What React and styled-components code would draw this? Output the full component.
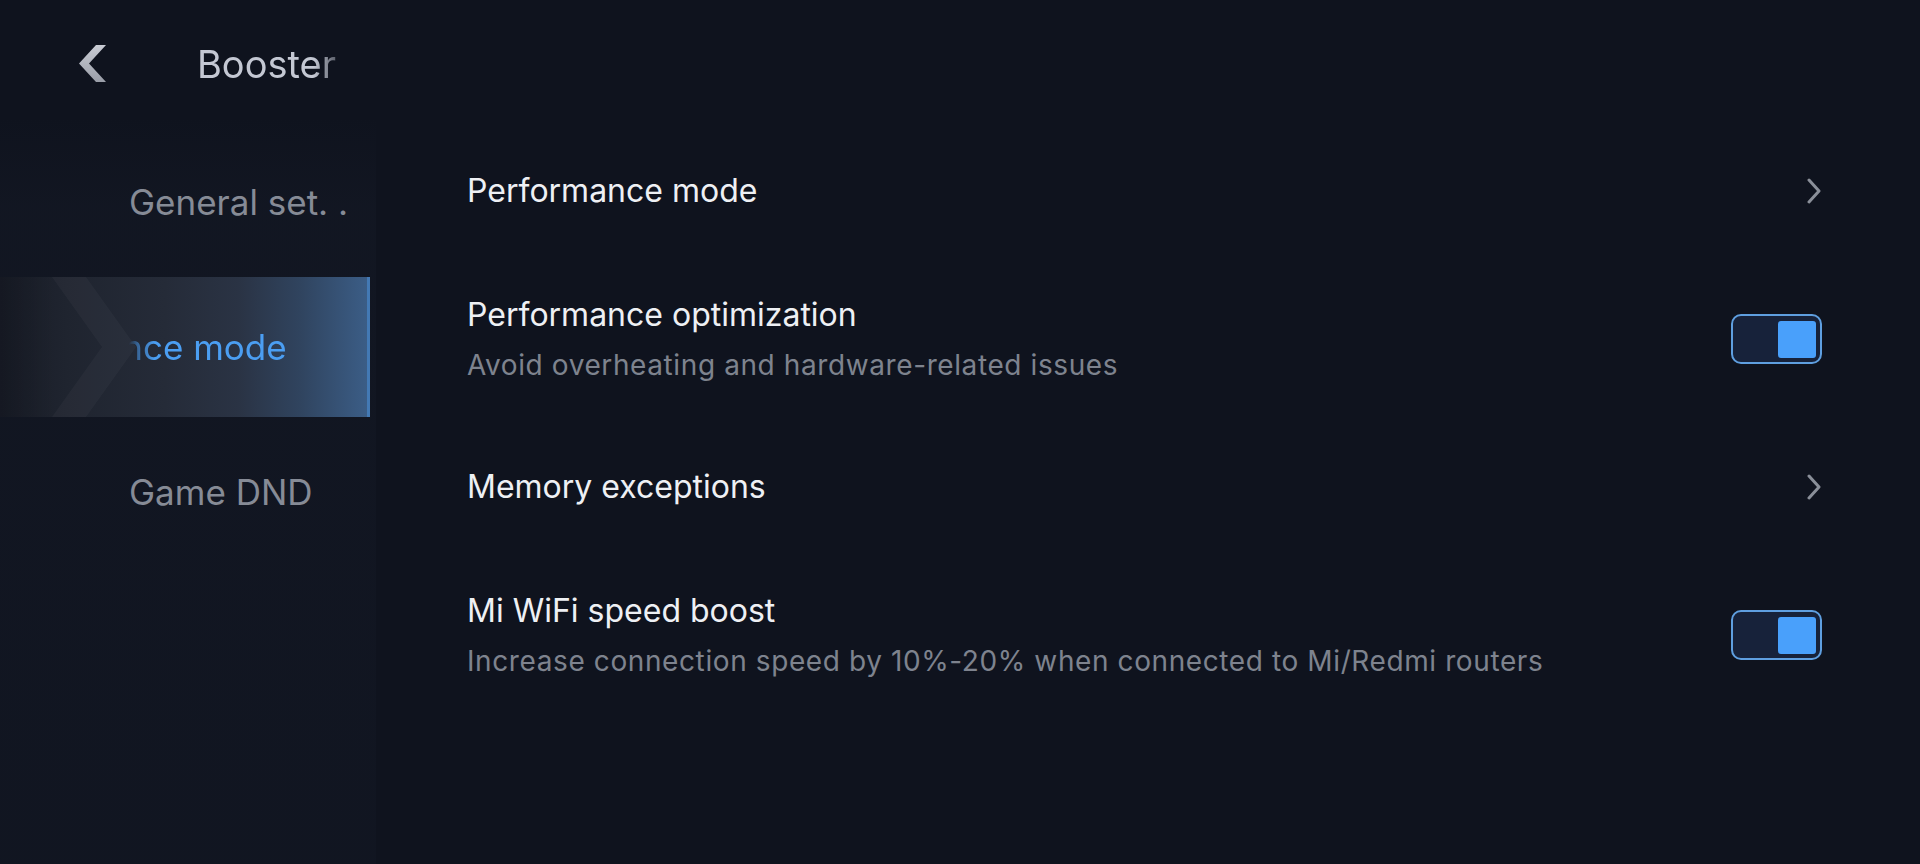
import React from "react";
import styled, { createGlobalStyle } from "styled-components";

const Global = createGlobalStyle`
  html, body { margin: 0; padding: 0; background: #0f131e; }
  body { font-family: Inter, "Noto Sans", Roboto, sans-serif; -webkit-font-smoothing: antialiased; }
  * { box-sizing: border-box; }
`;

const Page = styled.div`
  width: 1920px;
  height: 864px;
  background: #0f131e;
  display: flex;
  flex-direction: column;
  overflow: hidden;
`;

const Header = styled.header`
  height: 117px;
  padding: 10px 0 0 78px;
  display: flex;
  align-items: center;
  flex-shrink: 0;
`;

const BackButton = styled.button`
  width: 29px;
  height: 39px;
  padding: 0;
  border: 0;
  background: none;
  display: flex;
  cursor: pointer;
`;

const Title = styled.h1`
  margin: 0 0 0 90px;
  width: 146px;
  font-size: 38px;
  font-weight: 400;
  color: #c4c8d3;
  white-space: nowrap;
  overflow: hidden;
  -webkit-mask-image: linear-gradient(90deg, #000 80%, rgba(0,0,0,0.25) 100%);
  mask-image: linear-gradient(90deg, #000 80%, rgba(0,0,0,0.25) 100%);
`;

const Body = styled.div`
  flex: 1;
  display: flex;
  min-height: 0;
`;

const Sidebar = styled.nav`
  width: 376px;
  flex-shrink: 0;
  padding: 15px 6px 0 0;
  display: flex;
  flex-direction: column;
  gap: 5px;
  background: linear-gradient(180deg, rgba(30,36,50,0) 0%, rgba(28,34,48,0.22) 12%, rgba(24,30,44,0.22) 100%);
`;

const NavItem = styled.div`
  position: relative;
  height: 140px;
  display: flex;
  align-items: center;
  padding-left: 129px;
  overflow: hidden;
  background: ${(p) =>
    p.$active
      ? "linear-gradient(90deg, #181c27 0%, #1f242f 18%, #252b38 45%, #2a3344 65%, #30445f 82%, #3b5d86 100%)"
      : "transparent"};
  border-right: ${(p) => (p.$active ? "3px solid #4379b4" : "0")};
  &::after {
    content: "";
    display: ${(p) => (p.$active ? "block" : "none")};
    position: absolute;
    right: -3px;
    top: 0;
    bottom: 0;
    width: 3px;
    background: linear-gradient(180deg, rgba(90,160,240,0.3) 0%, #5fa8f5 50%, rgba(90,160,240,0.3) 100%);
  }
`;

const Watermark = styled.svg`
  position: absolute;
  left: 0;
  top: 0;
  width: 160px;
  height: 140px;
`;

const NavLabel = styled.span`
  position: relative;
  display: block;
  font-size: 35px;
  font-weight: 400;
  white-space: nowrap;
  color: ${(p) => (p.$active ? "#4b9ef2" : "#868b96")};
  ${(p) =>
    p.$active &&
    `
    width: 200px;
    overflow: hidden;
    -webkit-mask-image: linear-gradient(90deg, transparent 0, rgba(0,0,0,0.5) 8px, #000 26px);
    mask-image: linear-gradient(90deg, transparent 0, rgba(0,0,0,0.5) 8px, #000 26px);
  `}
`;

const Marquee = styled.span`
  display: inline-block;
  transform: translateX(${(p) => p.$offset || 0}px);
`;

const Content = styled.main`
  flex: 1;
  padding: 0 98px 0 91px;
  display: flex;
  flex-direction: column;
`;

const Row = styled.div`
  height: 148px;
  display: flex;
  align-items: center;
  justify-content: space-between;
`;

const Texts = styled.div`
  display: flex;
  flex-direction: column;
  gap: 12px;
`;

const RowTitle = styled.div`
  font-size: 32px;
  line-height: 40px;
  color: #eef0f4;
  font-weight: 400;
`;

const RowSub = styled.div`
  font-size: 28px;
  line-height: 36px;
  letter-spacing: 0.6px;
  color: #7e838e;
  font-weight: 400;
`;

const Toggle = styled.div`
  width: 91px;
  height: 50px;
  border: 2px solid #5f9fe0;
  border-radius: 10px;
  background: #17223a;
  display: flex;
  align-items: center;
  justify-content: ${(p) => (p.$on ? "flex-end" : "flex-start")};
  padding: 0 4px;
`;

const Knob = styled.div`
  width: 38px;
  height: 37px;
  border-radius: 3px;
  background: #49a0fb;
`;

const Chevron = () => (
  <svg width="16" height="26" viewBox="0 0 16 26">
    <path d="M3 2 L13 13 L3 24" fill="none" stroke="#8a8f99" strokeWidth="3" strokeLinecap="round" strokeLinejoin="round" />
  </svg>
);

const BackIcon = () => (
  <svg width="29" height="39" viewBox="0 0 29 39">
    <defs>
      <linearGradient id="bk" x1="0" y1="0" x2="0" y2="1">
        <stop offset="0" stopColor="#c9ccd4" />
        <stop offset="1" stopColor="#9a9ea8" />
      </linearGradient>
    </defs>
    <polygon points="18,1 28,1 11,19.5 28,38 18,38 1,19.5" fill="url(#bk)" />
  </svg>
);

const rows = [
  { title: "Performance mode", type: "link" },
  { title: "Performance optimization", sub: "Avoid overheating and hardware-related issues", type: "toggle" },
  { title: "Memory exceptions", type: "link" },
  { title: "Mi WiFi speed boost", sub: "Increase connection speed by 10%-20% when connected to Mi/Redmi routers", type: "toggle" },
];

export default function App() {
  return (
    <Page>
      <Global />
      <Header>
        <BackButton aria-label="Back">
          <BackIcon />
        </BackButton>
        <Title>Booster</Title>
      </Header>
      <Body>
        <Sidebar>
          <NavItem>
            <NavLabel>General set. .</NavLabel>
          </NavItem>
          <NavItem $active>
            <Watermark viewBox="0 0 160 140">
              <defs>
                <linearGradient id="wm" x1="0" y1="0" x2="1" y2="0">
                  <stop offset="0" stopColor="#000" stopOpacity="0.14" />
                  <stop offset="0.35" stopColor="#000" stopOpacity="0" />
                </linearGradient>
              </defs>
              <rect x="0" y="0" width="160" height="140" fill="url(#wm)" />
              <polygon points="52,0 86,0 136,70 86,140 52,140 102,70" fill="rgba(255,255,255,0.03)" />
            </Watermark>
            <NavLabel $active>
              <Marquee $offset={-160}>Performance mode</Marquee>
            </NavLabel>
          </NavItem>
          <NavItem>
            <NavLabel>Game DND</NavLabel>
          </NavItem>
        </Sidebar>
        <Content>
          {rows.map((r) => (
            <Row key={r.title}>
              <Texts>
                <RowTitle>{r.title}</RowTitle>
                {r.sub && <RowSub>{r.sub}</RowSub>}
              </Texts>
              {r.type === "link" ? (
                <Chevron />
              ) : (
                <Toggle $on>
                  <Knob />
                </Toggle>
              )}
            </Row>
          ))}
        </Content>
      </Body>
    </Page>
  );
}
